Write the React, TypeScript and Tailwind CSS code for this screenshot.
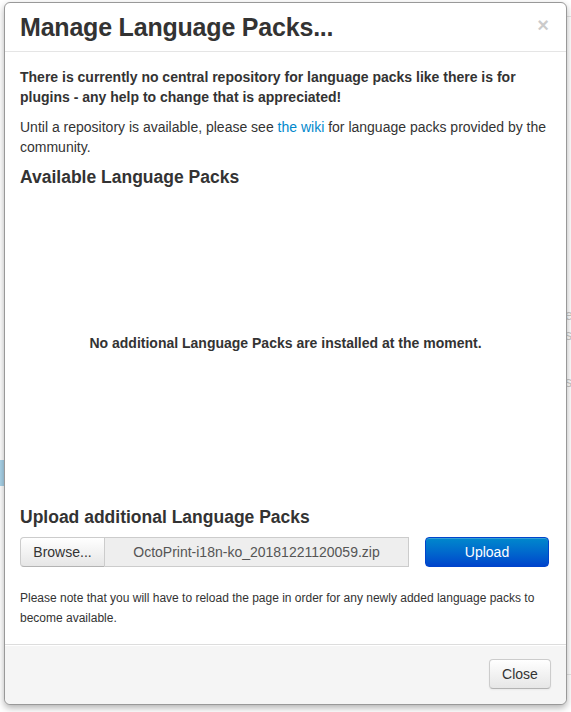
import React from "react";

export default function App() {
  return (
    <div
      className="relative w-[571px] h-[712px] bg-white overflow-hidden text-[#333]"
      style={{ fontFamily: '"Liberation Sans", Arial, Helvetica, sans-serif' }}
    >
      {/* faint background page bits */}
      <div className="absolute left-0 top-[460px] w-[6px] h-[26px] bg-[#a9d3e9]" />
      <div className="absolute left-[566px] top-[16px] w-[10px] h-px bg-[#e5e5e5]" />
      <div className="absolute left-[566px] top-[674px] w-[10px] h-px bg-[#e5e5e5]" />
      <div className="absolute left-[565px] top-[305px] text-[14px] leading-[20px] text-[#c8c8c8]">e</div>
      <div className="absolute left-[565px] top-[325px] text-[14px] leading-[20px] text-[#c8c8c8]">s</div>
      <div className="absolute left-[565px] top-[372px] text-[14px] leading-[20px] text-[#c8c8c8]">s</div>

      <div className="pl-[4px] pt-[2px]">
        <div className="relative w-[563px] h-[703px] flex flex-col bg-white border border-[#999] rounded-[6px] shadow-[0_3px_7px_rgba(0,0,0,0.3)] overflow-hidden">
          {/* header */}
          <div className="flex items-center justify-between h-[49px] px-[15px] border-b border-[#e5e5e5] shrink-0">
            <h3 className="text-[25px] font-bold leading-[30px] tracking-[-0.2px]">Manage Language Packs...</h3>
            <span className="text-[20px] font-bold leading-[20px] text-[#000] opacity-20 mr-[2px] mt-[-4px]">×</span>
          </div>

          {/* body */}
          <div className="flex-1 px-[15px] pt-[15px] pb-[15px] text-[14px] leading-[20px]">
            <p className="font-bold mb-[10px]">
              There is currently no central repository for language packs like there is for plugins - any help to change that is appreciated!
            </p>
            <p className="mb-[10px]">
              Until a repository is available, please see <span className="text-[#0088cc]">the wiki</span> for language packs provided by the community.
            </p>
            <h4 className="text-[17.5px] font-bold leading-[20px] mb-[10px]">Available Language Packs</h4>
            <div className="h-[292px] flex items-center justify-center font-bold">
              No additional Language Packs are installed at the moment.
            </div>
            <h4 className="text-[17.5px] font-bold leading-[20px] mt-[18px] mb-[10px]">Upload additional Language Packs</h4>
            <div className="flex items-center h-[30px]">
              <div className="flex h-[30px] w-[389px]">
                <div className="w-[85px] h-[30px] flex items-center justify-center border border-[#ccc] border-b-[#b3b3b3] rounded-l-[4px] bg-gradient-to-b from-white to-[#e6e6e6] text-[14px] text-[#333]">
                  Browse...
                </div>
                <div className="flex-1 h-[30px] flex items-center justify-center border border-l-0 border-[#ccc] bg-[#eee] text-[14px] text-[#555]">
                  OctoPrint-i18n-ko_20181221120059.zip
                </div>
              </div>
              <div className="ml-[16px] w-[124px] h-[30px] flex items-center justify-center rounded-[4px] border border-[#0044cc] bg-gradient-to-b from-[#0088cc] to-[#0044cc] text-white text-[14px] shadow-[inset_0_1px_0_rgba(255,255,255,0.2)]">
                Upload
              </div>
            </div>
            <p className="mt-[21px] text-[12px] leading-[20px]">
              Please note that you will have to reload the page in order for any newly added language packs to become available.
            </p>
          </div>

          {/* footer */}
          <div className="h-[60px] shrink-0 border-t border-[#ddd] bg-[#f5f5f5] flex justify-end items-start pt-[14px] pr-[15px] rounded-b-[6px] shadow-[inset_0_1px_0_#fff]">
            <div className="w-[62px] h-[30px] flex items-center justify-center border border-[#ccc] border-b-[#b3b3b3] rounded-[4px] bg-gradient-to-b from-white to-[#e6e6e6] text-[14px] text-[#333] shadow-[inset_0_1px_0_rgba(255,255,255,0.2),0_1px_2px_rgba(0,0,0,0.05)]">
              Close
            </div>
          </div>
        </div>
      </div>
    </div>
  );
}
